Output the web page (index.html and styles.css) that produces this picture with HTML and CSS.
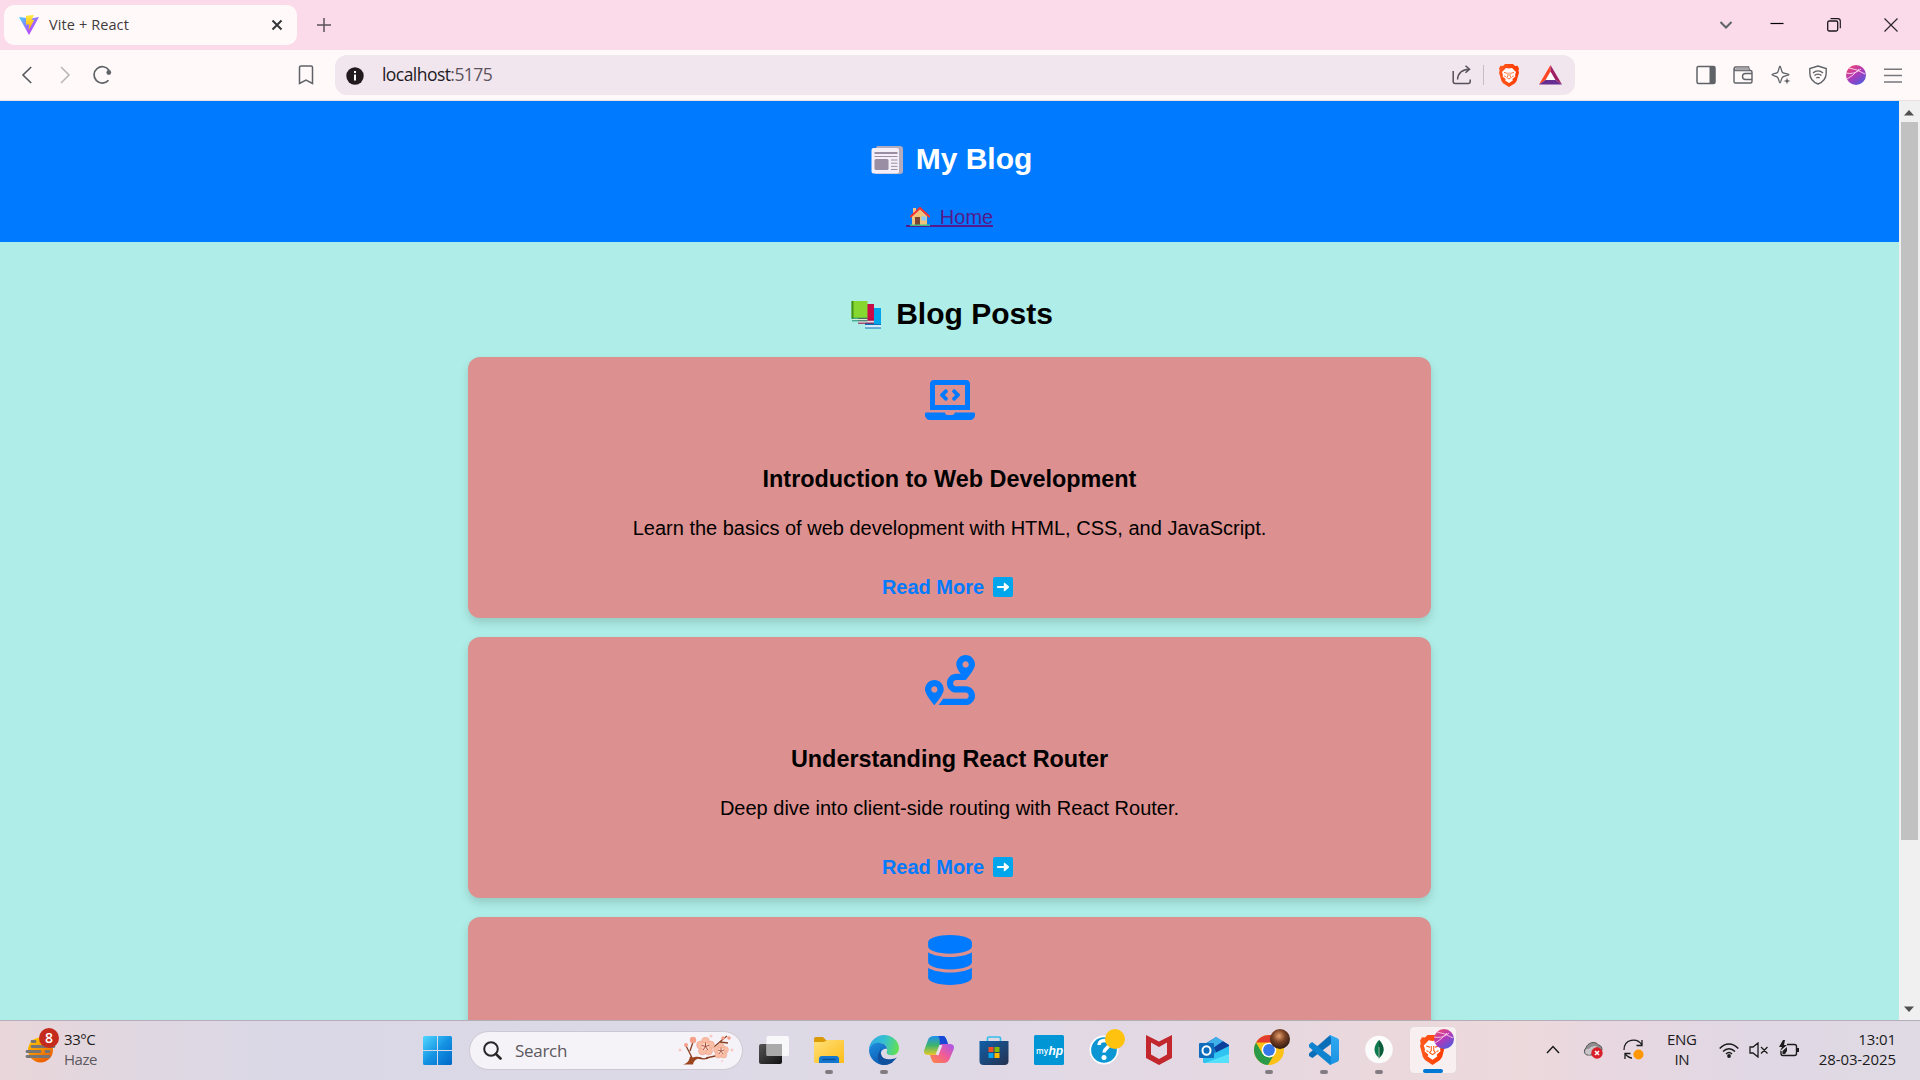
FILE: index.html
```html
<!DOCTYPE html>
<html lang="en">
<head>
<meta charset="utf-8">
<title>Vite + React</title>
<link rel="stylesheet" href="styles.css">
</head>
<body>
<svg class="defs" width="0" height="0" aria-hidden="true">
  <defs>
    <linearGradient id="viteA" x1="0" y1="0" x2="1" y2="1"><stop offset="0" stop-color="#41d1ff"/><stop offset=".6" stop-color="#a95cff"/><stop offset="1" stop-color="#bd34fe"/></linearGradient>
    <linearGradient id="viteB" x1="0" y1="0" x2="0" y2="1"><stop offset="0" stop-color="#ffea45"/><stop offset="1" stop-color="#ffa800"/></linearGradient>
    <linearGradient id="planet" x1=".1" y1="0" x2=".8" y2="1"><stop offset="0" stop-color="#f4486a"/><stop offset=".5" stop-color="#b13ab8"/><stop offset="1" stop-color="#4a5be0"/></linearGradient>
    <linearGradient id="win" x1="0" y1="0" x2="1" y2="1"><stop offset="0" stop-color="#4fd8ff"/><stop offset=".5" stop-color="#1593e3"/><stop offset="1" stop-color="#0067c8"/></linearGradient>
    <linearGradient id="sun" x1="0" y1="0" x2=".6" y2="1"><stop offset="0" stop-color="#ffd500"/><stop offset="1" stop-color="#ee5a00"/></linearGradient>
    <linearGradient id="folder" x1="0" y1="0" x2="1" y2="1"><stop offset="0" stop-color="#ffe07a"/><stop offset="1" stop-color="#fdbd18"/></linearGradient>
    <linearGradient id="edgeTop" x1="0" y1=".3" x2="1" y2=".5"><stop offset="0" stop-color="#2fa9e6"/><stop offset=".5" stop-color="#35c1cf"/><stop offset="1" stop-color="#62e052"/></linearGradient>
    <linearGradient id="edgeBot" x1="0" y1="0" x2=".6" y2="1"><stop offset="0" stop-color="#1f8fdf"/><stop offset="1" stop-color="#0a57b0"/></linearGradient>
    <linearGradient id="copL" x1="0" y1="0" x2="0" y2="1"><stop offset="0" stop-color="#1f8ff0"/><stop offset=".5" stop-color="#3fb56c"/><stop offset="1" stop-color="#e8c92a"/></linearGradient>
    <linearGradient id="copR" x1="1" y1="0" x2="0" y2="1"><stop offset="0" stop-color="#a557f0"/><stop offset=".5" stop-color="#f05c96"/><stop offset="1" stop-color="#ff8a3a"/></linearGradient>
    <linearGradient id="store" x1="0" y1="0" x2="1" y2="1"><stop offset="0" stop-color="#0f5fa8"/><stop offset="1" stop-color="#26314f"/></linearGradient>
    <linearGradient id="brave" x1="0" y1="0" x2="1" y2="0"><stop offset="0" stop-color="#ff5a1f"/><stop offset="1" stop-color="#ff3a00"/></linearGradient>
    <linearGradient id="dark" x1="0" y1="0" x2="1" y2="1"><stop offset="0" stop-color="#555"/><stop offset="1" stop-color="#111"/></linearGradient>
    <linearGradient id="vs" x1="0" y1="0" x2="0" y2="1"><stop offset="0" stop-color="#32a9f2"/><stop offset="1" stop-color="#1c93e2"/></linearGradient>
    <radialGradient id="photo" cx=".45" cy=".35" r=".7"><stop offset="0" stop-color="#e8a06c"/><stop offset=".45" stop-color="#7a4124"/><stop offset="1" stop-color="#22150f"/></radialGradient>
    <symbol id="lion" viewBox="0 0 20 23" preserveAspectRatio="none"><path fill="url(#brave)" d="M6 0h8l2 2 2.500-.3L20 4.500l-.6 2L20 8.500l-2.300 8.300-1.700 2.400L10 23l-6-3.800-1.700-2.400L0 8.500l.6-2L0 4.500 1.500 1.700 4 2z"/><path fill="#fff" d="M7 4l3 .6L13 4l4 4-1 3 .4 1.500-3 2.500.4 1.500L10 19l-3.800-2.500.4-1.500-3-2.500L4 11 3 8z"/><path fill="none" stroke="#ff5000" stroke-width=".8" d="M5 8.400l3 .9M15 8.400l-3 .9M9 8.500v3.500l-1.300 1.500L10 15l2.300-1.500L11 12V8.500M5.200 12l1.600.6M14.800 12l-1.600.6"/></symbol>
    <symbol id="arrowEmoji" viewBox="0 0 20 20"><rect width="20" height="20" rx="2" fill="#00a6ed"/><path d="M4.800 10h9" stroke="#fff" stroke-width="2" stroke-linecap="round"/><path d="M11.500 6.500l4 3.500-4 3.500z" fill="#fff" stroke="#fff" stroke-width="1.400" stroke-linejoin="round"/></symbol>
    <symbol id="flower" viewBox="0 0 16 16"><g fill="#f9bda6" stroke="#ee9a82" stroke-width=".4"><circle cx="8" cy="3.600" r="3.300"/><circle cx="12.200" cy="6.700" r="3.300"/><circle cx="10.600" cy="11.800" r="3.300"/><circle cx="5.400" cy="11.800" r="3.300"/><circle cx="3.800" cy="6.700" r="3.300"/></g><circle cx="8" cy="8" r="3" fill="#fcd9c6"/><path d="M8 8V4.500M8 8l3.200-1M8 8l2 3M8 8l-2 3M8 8L4.800 7" stroke="#a34a3a" stroke-width=".8" fill="none"/></symbol>
  </defs>
</svg>

<div class="tabstrip">
  <div class="tab">
    <svg class="favicon" width="20" height="20" viewBox="0 0 20 20"><path fill="url(#viteA)" d="M0 2l10 18L20 2l-8 1.500z"/><path fill="url(#viteB)" d="M7 .8L15 0l-2.500 5 2.800-.3L9.500 15.500l.8-6H7z"/></svg>
    <span class="tab-title">Vite + React</span>
    <svg class="tab-close" width="12" height="12" viewBox="0 0 12 12"><path d="M1.500 1.500l9 9m0-9l-9 9" stroke="#34363a" stroke-width="2"/></svg>
  </div>
  <svg class="new-tab" width="14" height="14" viewBox="0 0 14 14"><path d="M7 0v14M0 7h14" stroke="#5a5359" stroke-width="1.500"/></svg>
  <div class="window-buttons">
    <svg width="14" height="10" viewBox="0 0 14 10"><path d="M1.500 2l5.500 5.500L12.500 2" fill="none" stroke="#5f6368" stroke-width="2"/></svg>
    <svg width="14" height="14" viewBox="0 0 14 14"><path d="M.5 5.500h13" stroke="#000" stroke-width="1.200"/></svg>
    <svg width="14" height="14" viewBox="0 0 14 14" fill="none" stroke="#1c181b"><rect x=".7" y="3" width="10" height="10" rx="1.500" stroke-width="1.300"/><path d="M3.500 .7h7.200a2.600 2.600 0 0 1 2.600 2.600v7" stroke-width="1.200"/></svg>
    <svg width="14" height="14" viewBox="0 0 14 14"><path d="M.5 .5l13 13m0-13l-13 13" stroke="#2b262a" stroke-width="1.200"/></svg>
  </div>
</div>

<div class="toolbar">
  <div class="nav">
    <svg width="20" height="20" viewBox="0 0 20 20"><path d="M14.200 2L6 10l8.200 8" fill="none" stroke="#55585d" stroke-width="1.600"/></svg>
    <svg width="20" height="20" viewBox="0 0 20 20"><path d="M6 2l8 8-8 8" fill="none" stroke="#b9b6b8" stroke-width="1.600"/></svg>
    <svg width="20" height="20" viewBox="0 0 20 20"><path d="M16.500 15.200A8.200 8.200 0 1 1 17 5.200" fill="none" stroke="#5f6368" stroke-width="1.700"/><circle cx="16.800" cy="7.500" r="2.400" fill="#5f6368"/></svg>
  </div>
  <svg class="bookmark" width="16" height="20" viewBox="0 0 16 20"><path d="M3 1h10a1.500 1.500 0 0 1 1.500 1.500v16L8 15.200 1.500 18.500v-16A1.500 1.500 0 0 1 3 1z" fill="none" stroke="#5f6368" stroke-width="1.500"/></svg>
  <div class="url">
    <svg class="info" width="18" height="18" viewBox="0 0 18 18"><circle cx="9" cy="9" r="8.700" fill="#221a1e"/><path d="M9 4v2M9 7.500V13.500" stroke="#fff" stroke-width="2"/></svg>
    <span class="host">localhost<span class="port">:5175</span></span>
    <svg class="share" width="20" height="20" viewBox="0 0 20 20" fill="none" stroke="#55505a" stroke-width="1.500"><path d="M1.200 6v10.500a2 2 0 0 0 2 2h13a2 2 0 0 0 2-2V14.500"/><path d="M5.500 14.500c.5-6.500 4-10 12-10.300M13.500 .8l4 3.400-4 3.500"/></svg>
    <i class="rule"></i>
    <svg class="shield" width="20" height="23"><use href="#lion"/></svg>
    <svg width="23" height="20" viewBox="0 0 23 20"><path fill="#ff4724" d="M11.500 0v6.500L6.500 15 0 19.500z"/><path fill="#9e1f63" d="M11.500 0v6.500l5 8.500 6.500 4.500z"/><path fill="#662d91" d="M0 19.500L6.500 15h10l6.500 4.500z"/><path fill="#fff" d="M11.500 7.200l4.400 7.800H7.100z"/></svg>
  </div>
  <div class="tools">
    <svg width="20" height="20" viewBox="0 0 20 20"><rect x="1" y="1.500" width="18" height="17" rx="1.500" fill="none" stroke="#5f6368" stroke-width="1.500"/><path d="M13.500 1.500H18a1 1 0 0 1 1 1v15a1 1 0 0 1-1 1h-4.500z" fill="#5f6368"/></svg>
    <svg width="20" height="20" viewBox="0 0 20 20" fill="none" stroke="#5f6368" stroke-width="1.400"><path d="M1 3.500v13a1.500 1.500 0 0 0 1.500 1.500h15a1.500 1.500 0 0 0 1.500-1.500V7a1.500 1.500 0 0 0-1.500-1.500H2.500A1.800 1.800 0 0 1 2.500 2h13l1 3.500"/><path d="M2.500 2.500h13l.8 2.700H2z" fill="#aaa6aa" stroke="none"/><path d="M19 8.500h-6.500a3 3 0 0 0 0 6H19"/></svg>
    <svg width="20" height="20" viewBox="0 0 20 20"><path d="M9 1.200c.8 0 1.300 5 2.500 6.300S18 8.600 18 9.600s-5 1.100-6.500 2.600S10 17.800 9 17.800 7.800 13.500 6.500 12.200 1 10.600 1 9.600s4.200-.7 5.500-2.100S8 1.200 9 1.200z" fill="none" stroke="#5f6368" stroke-width="1.300"/><path d="M16 12.500l1 2.500 2.500 1-2.500 1-1 2.500-1-2.500-2.500-1 2.500-1z" fill="#5f6368" stroke="#fff9f9" stroke-width=".3"/></svg>
    <svg width="20" height="20" viewBox="0 0 20 20" fill="none" stroke="#5f6368" stroke-width="1.400"><path d="M10 1l8.200 2.500V8c0 5.500-3 9-8.200 11C4.800 17 1.800 13.500 1.800 8V3.500z"/><path d="M5 8c3-2.700 7-2.700 10 0M6.500 10.600c2-1.900 5-1.900 7 0M8.300 13q1.700-1.200 3.400 0"/></svg>
    <svg width="20" height="20" viewBox="0 0 20 20"><circle cx="10" cy="10" r="10" fill="url(#planet)"/><path d="M0 8q8 2 15-4M3 3q8 1 16 6M1 14q6-3 12-10" fill="none" stroke="#ffd9ee" stroke-width=".9"/></svg>
    <svg width="20" height="20" viewBox="0 0 20 20"><path d="M1 4.200h18M1 10.500h18M1 17h18" stroke="#77777c" stroke-width="1.500"/></svg>
  </div>
</div>

<div class="viewport">
  <div class="page">
    <header class="site-header">
      <h2 class="brand"><svg width="32" height="28" viewBox="0 0 32 28"><path d="M6 0h23a3 3 0 0 1 3 3v22a3 3 0 0 1-3 3H4V4z" fill="#b4acbc"/><rect x=".5" y="2" width="27.500" height="25.500" rx="2" fill="#f3eef8"/><path d="M3.500 7h23" stroke="#998ea4" stroke-width="2"/><path d="M3.500 10.500h23M20 14h6.500M20 17.200h6.500M20 20.400h6.500M20 23.500h6.500" stroke="#998ea4" stroke-width="1"/><rect x="3.500" y="13" width="14" height="11" rx="1.500" fill="#998ea4"/></svg><span>My Blog</span></h2>
      <a class="home"><svg width="20" height="19" viewBox="0 0 20 19"><path d="M3 1h3v6H3z" fill="#f3c08a"/><path d="M10 2l7 7v9H2V9z" fill="#f0c27b"/><path d="M5 10h5v8H5z" fill="#7d4533"/><rect x="11.500" y="9.500" width="4.500" height="4" fill="#83cbff"/><path d="M.8 9.500L10 1l9.200 8.500" fill="none" stroke="#f8312f" stroke-width="1.900" stroke-linecap="round"/><path d="M0 18.200h20" stroke="#44c98a" stroke-width="1.400"/></svg><span>Home</span></a>
    </header>
    <main class="posts">
      <h2 class="posts-title"><svg width="31" height="29" viewBox="0 0 31 29"><path d="M16 8h14v18H14z" fill="#00a6ed"/><path d="M14 25h16v3H15z" fill="#d7eaf7"/><path d="M14 24.500h16M14 28h16" stroke="#0074ba"/><path d="M8 4h15v17H7z" fill="#ca0b4a"/><path d="M7 20.500h16v2.200H8z" fill="#efd5df"/><path d="M7 20h16M7 23.200h16" stroke="#990839"/><path d="M.5 1h16v17H.5z" fill="#86d72f"/><path d="M.5 1h2v18h-2z" fill="#44911b"/><path d="M1 18.800h15.500v1.700H1z" fill="#d9edd0"/><path d="M1 18.200h15.500M1 20.800h15.500" stroke="#008463" stroke-width=".9"/></svg><span>Blog Posts</span></h2>
      <article class="card">
        <svg width="50" height="50" viewBox="0 0 640 512" fill="#007bff"><path d="M255.030 261.650c6.250 6.250 16.380 6.250 22.630 0l11.310-11.310c6.250-6.250 6.250-16.380 0-22.630L253.250 192l35.710-35.720c6.250-6.250 6.250-16.380 0-22.630l-11.310-11.310c-6.250-6.250-16.380-6.250-22.630 0l-58.340 58.340c-6.250 6.250-6.250 16.380 0 22.630l58.350 58.340zm96.010-11.300l11.310 11.310c6.250 6.250 16.380 6.250 22.630 0l58.340-58.340c6.250-6.250 6.250-16.380 0-22.630l-58.340-58.340c-6.250-6.250-16.380-6.250-22.630 0l-11.310 11.310c-6.250 6.250-6.250 16.380 0 22.630L386.750 192l-35.710 35.720c-6.250 6.250-6.250 16.380 0 22.630zM624 416H381.540c-.74 19.810-14.710 32-32.740 32H288c-18.690 0-33.020-17.470-32.770-32H16c-8.800 0-16 7.200-16 16v16c0 35.200 28.800 64 64 64h512c35.200 0 64-28.800 64-64v-16c0-8.800-7.200-16-16-16zM576 48c0-26.400-21.600-48-48-48H112C85.600 0 64 21.600 64 48v336h512V48zm-64 272H128V64h384v256z"/></svg>
        <h3>Introduction to Web Development</h3>
        <p>Learn the basics of web development with HTML, CSS, and JavaScript.</p>
        <a class="more"><span>Read More</span><svg width="20" height="20"><use href="#arrowEmoji"/></svg></a>
      </article>
      <article class="card">
        <svg width="50" height="50" viewBox="0 0 512 512" fill="#007bff"><path d="M416 320h-96c-17.600 0-32-14.400-32-32s14.400-32 32-32h96s96-107 96-160-43-96-96-96-96 43-96 96c0 25.500 22.200 63.400 45.300 96H320c-52.900 0-96 43.100-96 96s43.100 96 96 96h96c17.600 0 32 14.400 32 32s-14.400 32-32 32H185.500c-16 24.800-33.800 47.700-47.300 64H416c52.900 0 96-43.100 96-96s-43.100-96-96-96zm0-256c17.700 0 32 14.300 32 32s-14.300 32-32 32-32-14.300-32-32 14.300-32 32-32zM96 256c-53 0-96 43-96 96s96 160 96 160 96-107 96-160-43-96-96-96zm0 128c-17.700 0-32-14.300-32-32s14.300-32 32-32 32 14.300 32 32-14.300 32-32 32z"/></svg>
        <h3>Understanding React Router</h3>
        <p>Deep dive into client-side routing with React Router.</p>
        <a class="more"><span>Read More</span><svg width="20" height="20"><use href="#arrowEmoji"/></svg></a>
      </article>
      <article class="card">
        <svg width="50" height="50" viewBox="0 0 448 512" fill="#007bff"><path d="M448 73.143v45.714C448 159.143 347.667 192 224 192S0 159.143 0 118.857V73.143C0 32.857 100.333 0 224 0s224 32.857 224 73.143zM448 176v102.857C448 319.143 347.667 352 224 352S0 319.143 0 278.857V176c48.125 33.143 136.208 48.572 224 48.572S399.874 209.143 448 176zm0 160v102.857C448 479.143 347.667 512 224 512S0 479.143 0 438.857V336c48.125 33.143 136.208 48.572 224 48.572S399.874 369.143 448 336z"/></svg>
      </article>
    </main>
  </div>
  <div class="scrollbar">
    <svg width="10" height="6" viewBox="0 0 10 6"><path d="M0 5.500L5 0l5 5.500z" fill="#505050"/></svg>
    <i class="thumb"></i>
    <svg class="down" width="10" height="6" viewBox="0 0 10 6"><path d="M0 .5L5 6l5-5.500z" fill="#505050"/></svg>
  </div>
</div>

<div class="taskbar">
  <div class="weather">
    <svg width="36" height="36" viewBox="0 0 36 36"><circle cx="15.500" cy="22" r="12.500" fill="url(#sun)"/><path d="M7 13.500h3M7 18.500h22M2 23.500h13M21 23.500h3M2 28.500h22" stroke="#767474" stroke-width="2.800" stroke-linecap="round"/><circle cx="24" cy="10" r="10" fill="#c42b1c"/><text x="24" y="15" text-anchor="middle" class="badge-num">8</text></svg>
    <div class="weather-text"><span>33°C</span><span class="muted">Haze</span></div>
  </div>
  <svg class="start" width="29" height="29" viewBox="0 0 29 29"><path fill="url(#win)" d="M1.500 0H14v14H0V1.500A1.500 1.500 0 0 1 1.500 0zM15 0h12.500A1.500 1.500 0 0 1 29 1.500V14H15zM0 15h14v14H1.500A1.500 1.500 0 0 1 0 27.500zM15 15h14v12.500a1.500 1.500 0 0 1-1.500 1.500H15z"/></svg>
  <div class="search">
    <svg width="19" height="19" viewBox="0 0 19 19"><circle cx="8" cy="8" r="6.800" fill="none" stroke="#262626" stroke-width="2"/><path d="M12.800 12.800l4.700 4.700" stroke="#262626" stroke-width="2.600" stroke-linecap="round"/></svg>
    <span>Search</span>
    <svg class="blossom" width="56" height="32" viewBox="0 0 56 32"><path d="M14 24c-2-5-4-8-6-12M12 17l3-9M36 13l8-7 5-4M42 8l8 1M20 24q8 2 12-1M28 24l14-3" fill="none" stroke="#8a3f22" stroke-width="1.300"/><path d="M5 30.500c4-1 6-3 7-8l3 1c2-1 6-1 9 0-4 1-8 2-9 7z" fill="#9b451f"/><use href="#flower" x="18" y="3" width="19" height="19"/><use href="#flower" x="35" y="9" width="16" height="16"/><g fill="#f6a08c"><circle cx="15" cy="6" r="3.200"/><circle cx="8" cy="11" r="2"/><circle cx="51" cy="4" r="1.800"/><circle cx="45" cy="4" r="1.800"/></g><g fill="#fac9c4"><circle cx="2" cy="16" r="1.600"/><circle cx="54" cy="16" r="1.600"/><circle cx="33" cy="2" r="1.600"/><circle cx="44" cy="27" r="1"/></g></svg>
  </div>
  <div class="apps">
    <div class="app"><svg width="30" height="30" viewBox="0 0 30 30"><rect x="0" y="9" width="23" height="20" rx="2" fill="url(#dark)"/><rect x="7.500" y="1" width="22.500" height="20" rx="1.500" fill="#fff" fill-opacity=".78"/><path d="M7.500 9H23v12H9a1.500 1.500 0 0 1-1.500-1.500z" fill="#aaa"/></svg></div>
    <div class="app open"><svg width="30" height="30" viewBox="0 0 30 30"><path d="M0 4a2 2 0 0 1 2-2h7l3 3h18v6H0z" fill="#dc9a08"/><path d="M0 7h10l3-2h17v23H1.500A1.500 1.500 0 0 1 0 26.500z" fill="url(#folder)"/><path d="M5 28v-4a3 3 0 0 1 3-3h14a3 3 0 0 1 3 3v4z" fill="#1278d0"/><path d="M9 24.500h12" stroke="#0b4f98" stroke-width="1.500" stroke-linecap="round"/></svg></div>
    <div class="app open"><svg width="30" height="30" viewBox="0 0 30 30"><path d="M0 15C0 7 7 0 15 0s15 6 15 13c0 5-4 8-8 7-4 0-5-2-4-4 1-4-2-8-7-8C5 8 1 11 0 15z" fill="url(#edgeTop)"/><path d="M0 15c1-5 6-8 11-7 4 0 7 3 7 6-2-1-6 1-6 4 0 6 6 9 10 9l2 0c-3 2-6 3-9 3C7 30 0 23 0 15z" fill="url(#edgeBot)"/><path d="M13 13c-4 5 0 13 10 11 2 0 4-1 5-2-3 5-8 8-13 8-6-1-9-9-2-17z" fill="#104f9b"/></svg></div>
    <div class="app"><svg width="30" height="30" viewBox="0 0 30 30"><path d="M11 1h8c2 0 3 2 4 5l1 3h-4c-3 0-4 2-5 5l-2 6H4c-4 0-5-3-3-7l3-8c1-3 3-4 7-4z" fill="url(#copL)"/><path d="M14 1h5c2 0 3 2 4 5l1 3h-4c-2 0-3 1-4 3-1-4 1-8-2-11z" fill="#1748d5"/><path d="M19 28h-8c-2 0-3-2-4-5l-1-3h4c3 0 4-2 5-5l2-6h9c4 0 5 3 3 7l-3 7c-1 3-3 5-7 5z" fill="url(#copR)"/><path d="M17 10l-4 10" stroke="#e9e0ec" stroke-width="3"/></svg></div>
    <div class="app"><svg width="30" height="30" viewBox="0 0 30 30"><path d="M8.500 7V3.500A1.500 1.500 0 0 1 10 2h10a1.500 1.500 0 0 1 1.500 1.500V7" fill="none" stroke="#35bdec" stroke-width="1.700"/><path d="M.5 6h29v20a4 4 0 0 1-4 4h-21a4 4 0 0 1-4-4z" fill="url(#store)"/><path d="M9.500 12h5v5h-5z" fill="#f25022"/><path d="M15.500 12h5v5h-5z" fill="#7fba00"/><path d="M9.500 18h5v5h-5z" fill="#00a4ef"/><path d="M15.500 18h5v5h-5z" fill="#ffb900"/></svg></div>
    <div class="app"><svg width="30" height="30" viewBox="0 0 30 30"><rect width="30" height="30" rx="1.500" fill="#0096d6"/><text x="2" y="18.500" class="hp-my">my</text><text x="14.500" y="20" class="hp">hp</text></svg></div>
    <div class="app"><svg class="wide" width="36" height="36" viewBox="0 0 36 36"><circle cx="15" cy="21" r="13.700" fill="#0d96d4" stroke="#fff" stroke-width="1.700"/><path d="M10 16c0-6 10-6 10-.5 0 4-5 3.500-5 8" fill="none" stroke="#fff" stroke-width="3.500"/><circle cx="15" cy="28.500" r="2.500" fill="#fff"/><circle cx="26" cy="10" r="10" fill="#ffc20e"/></svg></div>
    <div class="app"><svg width="30" height="30" viewBox="0 0 30 30"><path fill="#c1272d" d="M2 0l13 6.500L28 0v23l-13 7-13-7zM7 7.500v12l8 4.500 8-4.500v-12L15 12z"/></svg></div>
    <div class="app"><svg width="30" height="30" viewBox="0 0 30 30"><path d="M4 10L17 2l13 8v16a2 2 0 0 1-2 2H6a2 2 0 0 1-2-2z" fill="#1a7fd0"/><path d="M8 8.500L17 2l7 4.200L14 13z" fill="#3fb0ea"/><path d="M15 12.500l9-6.300L30 10v2L18 19z" fill="#0b3f9c"/><path d="M12 20l18-9v15a2 2 0 0 1-2 2H6a2 2 0 0 1-2-2v-3z" fill="#2fc3f2"/><path d="M6 28l24-9v7a2 2 0 0 1-2 2z" fill="#55e0fb"/><rect x="0" y="8" width="15" height="15" rx="1" fill="#0f6cbd"/><ellipse cx="7.500" cy="15.500" rx="4" ry="4.300" fill="none" stroke="#fff" stroke-width="2"/></svg></div>
    <div class="app open"><svg class="wide" width="36" height="36" viewBox="0 0 36 36"><circle cx="15" cy="21" r="15" fill="#fbc116"/><path d="M2 13.500A15 15 0 0 1 28 13.500H15z" fill="#e33b2e"/><path d="M2 13.500l6.500 11.250L15 28.500l4-1-5 8.500A15 15 0 0 1 2 13.500z" fill="#2a9a48"/><circle cx="15" cy="21" r="7.300" fill="#fff"/><circle cx="15" cy="21" r="5.900" fill="#3477e8"/><circle cx="26" cy="10" r="10" fill="url(#photo)"/></svg></div>
    <div class="app open"><svg width="30" height="30" viewBox="0 0 30 30"><path d="M22 0v9L3.500 23 0 21v-2.500L20 1z" fill="#0a6fb8"/><path d="M0 9.500L3 7l19 14.500V30l-2-1L0 12z" fill="#1083ce"/><path d="M21 0l8 3.500 1 1.500v20l-1 1.500-8 3.500-1-1 2-1V2l-2-1z" fill="url(#vs)"/></svg></div>
    <div class="app open"><svg width="30" height="30" viewBox="0 0 30 30"><circle cx="15" cy="14.500" r="13.800" fill="#fbfbfb"/><path d="M15 5c6 6 6 13 0 18-6-5-6-12 0-18z" fill="#0b7a4f"/><path d="M15 5c6 6 6 13 0 18z" fill="#0a5c3d"/><path d="M15 12v12" stroke="#b9c4b0" stroke-width=".8"/></svg></div>
    <div class="app active"><svg class="wide" width="36" height="36" viewBox="0 0 36 36"><use href="#lion" x="2" y="6" width="25" height="30"/><circle cx="26" cy="10" r="10" fill="url(#planet)"/><path d="M16 8q8 2 15-4M19 3q8 1 16 6M17 14q6-3 12-10" fill="none" stroke="#ffd9ee" stroke-width=".8"/></svg></div>
  </div>
  <div class="tray">
    <svg width="14" height="9" viewBox="0 0 14 9"><path d="M1 8l6-6.500L13 8" fill="none" stroke="#1b1b1b" stroke-width="1.500"/></svg>
    <svg class="cloud" width="20" height="18" viewBox="0 0 20 18"><path d="M4 14a4 4 0 0 1-1-7C4 2 12-1 15.500 4c3 .5 3.500 3 3.500 5l-5 5z" fill="#8e8e8e" stroke="#555"/><path d="M3 13c-2-3 0-6 3-5 2-3 5-3 8-3L7 14z" fill="#c9c5c8"/><circle cx="14" cy="12" r="5.700" fill="#d9202a"/><path d="M12 10l4 4m0-4l-4 4" stroke="#fff" stroke-width="1.500"/></svg>
    <svg class="sync" width="21" height="21" viewBox="0 0 21 21"><path d="M1 11C1 0 14-2 19 6M19 1v5.500h-5.500M9 19C6 19 4 17 2 15M2 20v-5.500h5.500" fill="none" stroke="#1b1b1b" stroke-width="1.300"/><circle cx="15.500" cy="15.500" r="5" fill="#ff9800"/></svg>
    <div class="lang"><span>ENG</span><span>IN</span></div>
    <svg class="wifi" width="20" height="16" viewBox="0 0 20 16"><path d="M.7 6.500c5.500-6 13-6 18.600 0M4 9.500c3.600-3.700 8.400-3.700 12 0M7 12c1.900-1.800 4.100-1.800 6 0" fill="none" stroke="#1b1b1b" stroke-width="1.500"/><circle cx="10" cy="14" r="1.900" fill="#1b1b1b"/></svg>
    <svg class="vol" width="20" height="16" viewBox="0 0 20 16"><path d="M1 5h3l5-4v14l-5-4H1zM12 5l6.500 6.500m0-6.500L12 11.500" fill="none" stroke="#1b1b1b" stroke-width="1.300"/></svg>
    <svg class="battery" width="21" height="17" viewBox="0 0 21 17"><path d="M8 4.500h7.500a2 2 0 0 1 2 2v7a2 2 0 0 1-2 2H4a2 2 0 0 1-2-2V11" fill="none" stroke="#1b1b1b" stroke-width="1.400"/><path d="M18 8h2v4h-2z" fill="#1b1b1b"/><path d="M4 0L0 7h3l-2 4 7-6H5l1-5z" fill="#1b1b1b"/><path d="M3.500 14v-3L8 7v4l-2 3z" fill="#1b1b1b"/></svg>
    <div class="clock"><span>13:01</span><span>28-03-2025</span></div>
  </div>
</div>
</body>
</html>
```
FILE: styles.css
```css
* { box-sizing: border-box; }
body {
  margin: 0;
  width: 1920px;
  height: 1080px;
  overflow: hidden;
  display: flex;
  flex-direction: column;
  font-family: "Open Sans", "Noto Sans", sans-serif;
}
svg { display: block; flex: none; }
.defs { position: absolute; }

/* browser chrome */
.tabstrip {
  flex: none;
  height: 50px;
  background: #fbdaea;
  display: flex;
  align-items: center;
  padding-left: 4px;
}
.tab {
  width: 293px;
  height: 40px;
  border-radius: 10px;
  background: #fff9f9;
  display: flex;
  align-items: center;
  padding: 0 14px 0 15px;
}
.tab-title {
  margin: -2px 0 0 10px;
  flex: 1;
  font-size: 14.500px;
  letter-spacing: .1px;
  color: #3f3b3f;
}
.new-tab { margin-left: 20px; }
.window-buttons {
  margin-left: auto;
  display: flex;
  align-items: center;
  gap: 43px;
  padding-right: 22px;
}
.window-buttons svg:first-child { margin-right: -6px; }

.toolbar {
  flex: none;
  height: 51px;
  background: #fff9f9;
  border-bottom: 1px solid #ecdfe2;
  display: flex;
  align-items: center;
  padding: 0 17px;
}
.nav { display: flex; gap: 17.500px; }
.bookmark { margin-left: 186px; }
.url {
  margin-left: 21px;
  width: 1240px;
  height: 40px;
  border-radius: 12px;
  background: #f1e5ee;
  display: flex;
  align-items: center;
  padding: 0 13px 0 11px;
}
.info { margin-top: 1px; }
.host {
  margin: -2px 0 0 18px;
  flex: 1;
  font-size: 17.500px;
  letter-spacing: -.55px;
  color: #221a22;
}
.port { color: #5c535c; }
.rule { width: 1px; height: 20px; background: #c5bcc4; margin: 0 15px 0 11px; }
.shield { margin-right: 20px; }
.tools { display: flex; gap: 17.500px; margin-left: 121px; }

/* page */
.viewport { flex: 1; min-height: 0; display: flex; overflow: hidden; }
.page {
  flex: 1;
  height: 919px;
  overflow: hidden;
  background: #afeee8;
  font-family: "Liberation Sans", Arial, sans-serif;
  font-size: 20px;
  line-height: 23px;
}
.site-header {
  height: 141px;
  background: #007bff;
  padding-top: 41px;
  display: flex;
  flex-direction: column;
  align-items: center;
}
h2, h3, p { margin: 0; }
h2 { font-size: 30px; line-height: 34px; display: flex; align-items: center; }
.brand { color: #fff; gap: 13px; padding-left: 4px; }
.brand svg { margin-top: 2px; }
.home {
  margin-top: 30px;
  color: #551a8b;
  display: flex;
  gap: 10px;
  padding: 0 0 0 4px;
  height: 21px;
  border-bottom: 2px solid #551a8b;
}
.home svg { margin-top: 1px; }
.posts { padding: 55px 468px 0 467px; display: flex; flex-direction: column; align-items: center; }
.posts-title { gap: 14px; margin-bottom: 26px; padding-left: 6px; color: #000; }
.card {
  width: 963px;
  height: 261px;
  flex: none;
  margin: 0 0 19px 1px;
  border-radius: 12px;
  background: #dc908f;
  box-shadow: 0 5px 10px rgba(0, 0, 0, .15);
  padding-top: 18px;
  display: flex;
  flex-direction: column;
  align-items: center;
}
.card h3 { font-size: 23.400px; line-height: 27px; margin-top: 41px; }
.card p { margin-top: 24px; }
.more { margin-top: 36px; padding-right: 4px; display: flex; gap: 9px; color: #007bff; font-weight: bold; }
.more svg { margin-top: 1px; }
.scrollbar {
  width: 21px;
  background: #f0f0f0;
  display: flex;
  flex-direction: column;
  align-items: center;
  padding: 9px 1px 8px 0;
}
.thumb { width: 17px; height: 718px; margin-top: 6px; background: #c1c1c1; }
.down { margin-top: auto; }

/* taskbar */
.taskbar {
  flex: none;
  height: 60px;
  border-top: 1px solid #b4aeb8;
  background: linear-gradient(90deg, #e9d6d9 0, #e0d7e0 120px, #dad8e6 280px, #dbd9e6 600px, #e0d9e5 1000px, #e3d8e3 1180px, #ebd8dc 1400px, #ecd9dc 1530px, #e7d7e1 1620px, #e0d8e4 1750px, #dfdae4 100%);
  display: flex;
  align-items: center;
  color: #1b1b1b;
}
.weather { width: 423px; display: flex; padding-left: 25px; gap: 3px; align-items: center; }
.weather svg { margin-top: -10px; }
.badge-num { font: 600 14px "Open Sans", sans-serif; fill: #fff; }
.weather-text { display: flex; flex-direction: column; font-size: 15px; line-height: 20px; letter-spacing: -.45px; margin-top: -4px; }
.muted { color: #5b585e; }
.start { margin-top: -1px; }
.search {
  margin: -1px 0 0 17px;
  width: 274px;
  height: 39px;
  border-radius: 20px;
  background: #f5f3f8;
  border: 1px solid #cdc8d3;
  display: flex;
  align-items: center;
  padding: 0 8px 0 13px;
  font-size: 17px;
  letter-spacing: -.3px;
  color: #5b585e;
}
.search span { margin-left: 13px; flex: 1; }
.apps { display: flex; margin: -2px 0 0 3px; }
.app {
  width: 55px;
  height: 48px;
  display: flex;
  justify-content: center;
  padding-top: 9px;
  position: relative;
}
.wide { margin: -6px -3px 0 3px; }
.open::after, .active::after {
  content: "";
  position: absolute;
  bottom: 0;
  left: 23.500px;
  width: 8px;
  height: 4px;
  border-radius: 2px;
  background: #827c82;
}
.active { width: 48px; margin-left: 3px; background: #f7eff0; border-radius: 5px; border: 1px solid #e5d9dc; padding-top: 8px; }
.active::after { left: 13px; width: 20px; background: #0078d4; }
.hp-my { font: 600 8px "Open Sans", sans-serif; fill: #fff; }
.hp { font: italic 700 12px "Liberation Sans", sans-serif; fill: #fff; }
.tray { flex: 1; display: flex; align-items: center; padding-right: 24px; margin: -2px 0 0 89px; }
.cloud { margin-left: 23px; }
.sync { margin-left: 20px; }
.lang, .clock {
  display: flex;
  flex-direction: column;
  font-size: 15px;
  line-height: 20px;
  letter-spacing: -.1px;
  margin-top: -2px;
}
.lang { align-items: center; margin-left: 23px; letter-spacing: -.3px; }
.clock { align-items: flex-end; margin-left: auto; }
.wifi { margin-left: 22px; }
.vol { margin: 0 10px; }
.battery { margin-top: -2px; }
```
